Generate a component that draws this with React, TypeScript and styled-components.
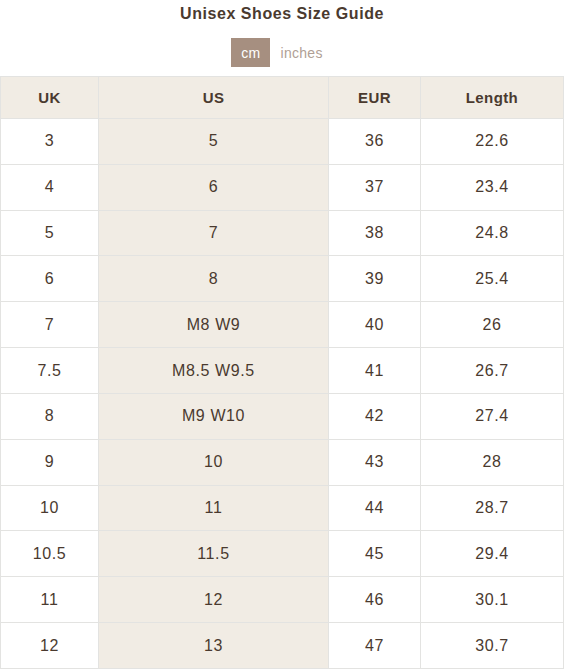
import React, { useState } from 'react'
import styled, { createGlobalStyle } from 'styled-components'

const GlobalStyle = createGlobalStyle`
    body {
        margin: 0;
        background: #fff;
        font-family: 'Liberation Sans', Arial, sans-serif;
        color: #4a3a2f;
    }
`

type Row = { uk: string; us: string; eur: string; cm: string; inch: string }

const rows: Row[] = [
    { uk: '3', us: '5', eur: '36', cm: '22.6', inch: '8.9' },
    { uk: '4', us: '6', eur: '37', cm: '23.4', inch: '9.2' },
    { uk: '5', us: '7', eur: '38', cm: '24.8', inch: '9.8' },
    { uk: '6', us: '8', eur: '39', cm: '25.4', inch: '10' },
    { uk: '7', us: 'M8 W9', eur: '40', cm: '26', inch: '10.2' },
    { uk: '7.5', us: 'M8.5 W9.5', eur: '41', cm: '26.7', inch: '10.5' },
    { uk: '8', us: 'M9 W10', eur: '42', cm: '27.4', inch: '10.8' },
    { uk: '9', us: '10', eur: '43', cm: '28', inch: '11' },
    { uk: '10', us: '11', eur: '44', cm: '28.7', inch: '11.3' },
    { uk: '10.5', us: '11.5', eur: '45', cm: '29.4', inch: '11.6' },
    { uk: '11', us: '12', eur: '46', cm: '30.1', inch: '11.9' },
    { uk: '12', us: '13', eur: '47', cm: '30.7', inch: '12.1' },
]

export default function App() {
    const [unit, setUnit] = useState<'cm' | 'inches'>('cm')

    return (
        <Wrap>
            <GlobalStyle />
            <Title>Unisex Shoes Size Guide</Title>
            <Toggle>
                <UnitButton active={unit === 'cm'} onClick={() => setUnit('cm')}>
                    cm
                </UnitButton>
                <UnitButton active={unit === 'inches'} onClick={() => setUnit('inches')}>
                    inches
                </UnitButton>
            </Toggle>
            <Table>
                <colgroup>
                    <col style={{ width: 98 }} />
                    <col style={{ width: 230 }} />
                    <col style={{ width: 92 }} />
                    <col />
                </colgroup>
                <thead>
                    <tr>
                        <Head>UK</Head>
                        <Head>US</Head>
                        <Head>EUR</Head>
                        <Head>Length</Head>
                    </tr>
                </thead>
                <tbody>
                    {rows.map((r) => (
                        <tr key={r.uk}>
                            <Cell>{r.uk}</Cell>
                            <Cell shaded>{r.us}</Cell>
                            <Cell>{r.eur}</Cell>
                            <Cell>{unit === 'cm' ? r.cm : r.inch}</Cell>
                        </tr>
                    ))}
                </tbody>
            </Table>
        </Wrap>
    )
}

const Wrap = styled.div`
    width: 564px;
`

const Title = styled.h1`
    margin: 0;
    padding-top: 5px;
    height: 25px;
    font-size: 16px;
    font-weight: bold;
    text-align: center;
    letter-spacing: 0.55px;
    color: #4a3a2f;
`

const Toggle = styled.div`
    display: flex;
    justify-content: center;
    margin-top: 8px;
    margin-bottom: 9px;
`

const UnitButton = styled.button<{ active: boolean }>`
    height: 29px;
    padding: 0 10px;
    border: none;
    font-family: inherit;
    font-size: 14px;
    letter-spacing: 0.3px;
    cursor: pointer;
    background: ${(p) => (p.active ? '#a68f80' : 'transparent')};
    color: ${(p) => (p.active ? '#fff' : '#b09f95')};
`

const Table = styled.table`
    width: 564px;
    border-collapse: collapse;
    table-layout: fixed;
    text-align: center;
`

const Head = styled.th`
    height: 41px;
    padding: 0;
    background: #f1ece4;
    border: 1px solid #e3e3e1;
    font-size: 15px;
    font-weight: bold;
    letter-spacing: 0.4px;
    color: #4a3a2f;
`

const Cell = styled.td<{ shaded?: boolean }>`
    height: 44.83px;
    padding: 0;
    border: 1px solid #e3e3e1;
    background: ${(p) => (p.shaded ? '#f1ece4' : '#fff')};
    font-size: 16px;
    letter-spacing: 0.6px;
    color: #4a3a2f;
`
